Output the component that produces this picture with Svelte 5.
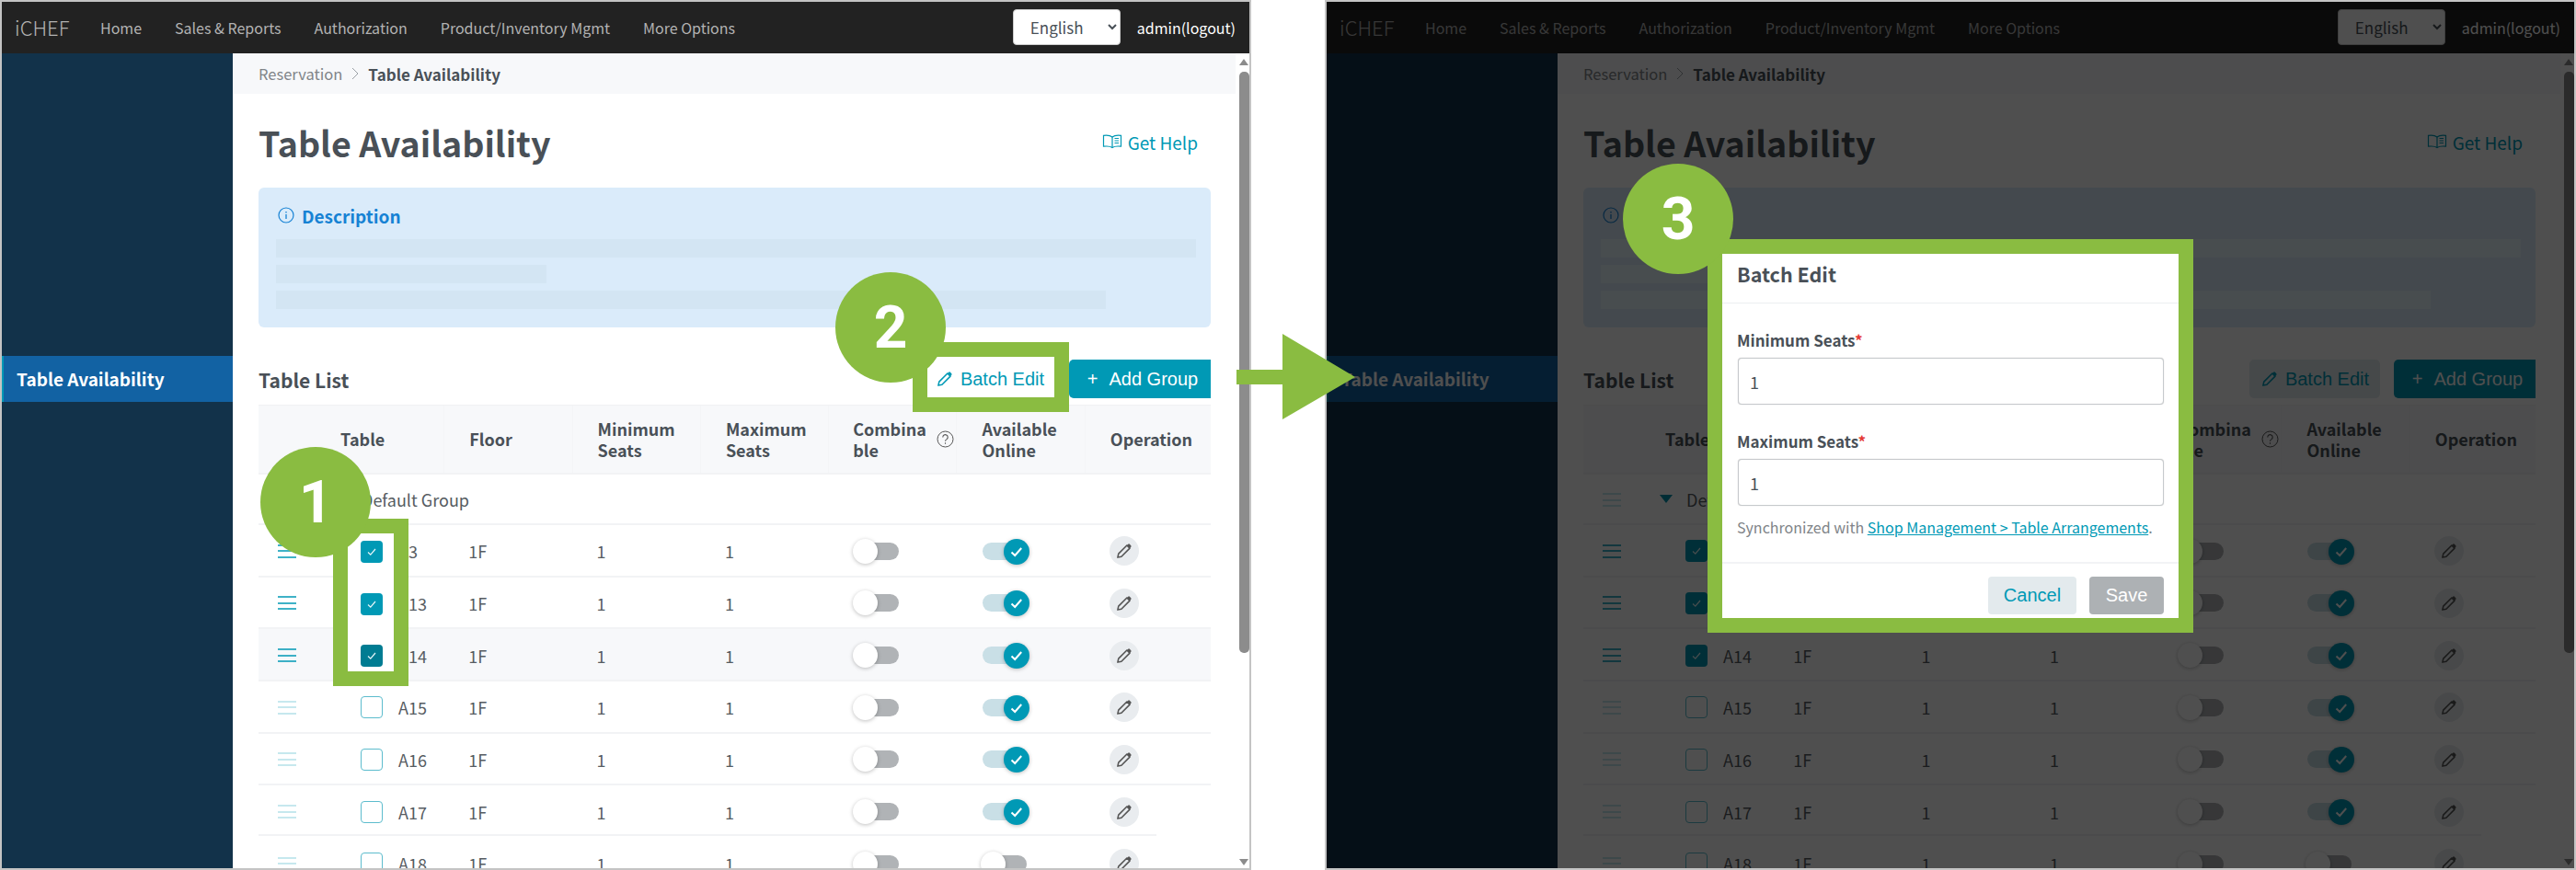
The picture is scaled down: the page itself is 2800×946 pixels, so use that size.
<script lang="ts">
  const nav = ['Home', 'Sales & Reports', 'Authorization', 'Product/Inventory Mgmt', 'More Options'];

  const rows = [
    { name: 'A3', checked: true, online: true },
    { name: 'A13', checked: true, online: true },
    { name: 'A14', checked: true, online: true, hover: true },
    { name: 'A15', checked: false, online: true },
    { name: 'A16', checked: false, online: true },
    { name: 'A17', checked: false, online: true, short: true },
    { name: 'A18', checked: false, online: false, short: true },
  ];
</script>

{#snippet pencil(size)}
  <svg class="pencil" width={size} height={size} viewBox="0 0 18 18">
    <path d="M2.6 15.4l.8-3.6 8.2-8.2 2.8 2.8-8.2 8.2z" fill="none" stroke="currentColor" stroke-width="1.4" stroke-linejoin="round" />
    <path d="M11.6 3.6l1-1a1.3 1.3 0 0 1 1.9 0l.9.9a1.3 1.3 0 0 1 0 1.9l-1 1z" fill="currentColor" />
  </svg>
{/snippet}

{#snippet checkbox(on, hover = false)}
  <span class="checkbox" class:checkbox--on={on} class:checkbox--hover={hover}>
    {#if on}
      <svg width="14" height="14" viewBox="0 0 14 14"><path d="M3 7.5l2.8 2.6L11 4" fill="none" stroke="#e6f6f9" stroke-width="1.2" /></svg>
    {/if}
  </span>
{/snippet}

{#snippet handle(active)}
  <span class="handle" class:handle--active={active}><i></i><i></i><i></i></span>
{/snippet}

{#snippet screen(dimmed)}
  <section class="screen" class:screen--dimmed={dimmed}>
    <header class="topbar">
      <span class="brand">iCHEF</span>
      <nav class="nav">
        {#each nav as item}
          <span>{item}</span>
        {/each}
      </nav>
      <select class="lang"><option>English</option></select>
      <span class="user">admin(logout)</span>
    </header>

    <div class="body">
      <aside class="sidebar">
        <div class="sidebar__item">Table Availability</div>
      </aside>

      <main class="main">
        <div class="crumbs">
          <span>Reservation</span>
          <svg width="10" height="16" viewBox="0 0 10 16"><path d="M2 2l6 6-6 6" fill="none" stroke="#9aa0a6" stroke-width="1" /></svg>
          <b>Table Availability</b>
        </div>

        <div class="content">
          <div class="head">
            <h1>Table Availability</h1>
            <span class="help">
              <svg width="22" height="16" viewBox="0 0 22 16" fill="none" stroke="currentColor" stroke-width="1.2">
                <path d="M11 3C9 1.4 5 1 1.5 1.4v11.8C5 12.8 9 13 11 14.5c2-1.5 6-1.7 9.500-1.300V1.400C17 1 13 1.400 11 3z" />
                <path d="M11 3v11.500M13.500 4.500h4.500M13.500 7h4.500M13.500 9.500h4.500" />
              </svg>
              Get Help
            </span>
          </div>

          <div class="desc">
            <div class="desc__title">
              <svg width="18" height="18" viewBox="0 0 18 18" fill="none" stroke="currentColor">
                <circle cx="9" cy="9" r="8" stroke-width="1.200" />
                <path d="M9 8v5" stroke-width="1.300" />
                <path d="M9 5v1.400" stroke-width="1.300" />
              </svg>
              Description
            </div>
            <div class="bar bar--full"></div>
            <div class="bar bar--short"></div>
            <div class="bar bar--long"></div>
          </div>

          <div class="list-head">
            <h2>Table List</h2>
            <div class="actions">
              <button class="btn btn--light" class:btn--plain={!dimmed}>{@render pencil(20)}Batch Edit</button>
              <button class="btn btn--primary"><span class="plus">+</span>Add Group</button>
            </div>
          </div>

          <div class="table">
            <div class="tr tr--head">
              <div></div>
              <div class="th">Table</div>
              <div class="th">Floor</div>
              <div class="th">Minimum<br />Seats</div>
              <div class="th">Maximum<br />Seats</div>
              <div class="th th--help">
                <span>Combina<br />ble</span>
                <svg width="19" height="19" viewBox="0 0 19 19" fill="none" stroke="#555">
                  <circle cx="9.500" cy="9.500" r="8.500" stroke-width="1" />
                  <path d="M6.800 7.400a2.700 2.700 0 1 1 4.200 2.200c-1 .6-1.500 1.100-1.500 2.200M9.500 13.200v1.500" stroke-width="1.100" />
                </svg>
              </div>
              <div class="th">Available<br />Online</div>
              <div class="th">Operation</div>
            </div>

            <div class="tr tr--group">
              <div class="td td--handle">{@render handle(false)}</div>
              <div class="group-name">
                <svg width="14" height="9" viewBox="0 0 14 9"><path d="M0 0h14L7 9z" fill="#0090aa" /></svg>
                Default Group
              </div>
            </div>

            {#each rows as row}
              <div class="tr" class:tr--hover={row.hover && !dimmed} class:tr--short={row.short}>
                <div class="td td--handle">{@render handle(row.checked)}</div>
                <div class="td td--table">
                  {@render checkbox(row.checked)}
                  <span>{row.name}</span>
                </div>
                <div class="td">1F</div>
                <div class="td">1</div>
                <div class="td">1</div>
                <div class="td"><span class="toggle"><i></i></span></div>
                <div class="td">
                  <span class="toggle" class:toggle--on={row.online}>
                    <i>
                      {#if row.online}
                        <svg width="18" height="18" viewBox="0 0 18 18"><path d="M3.500 9.500l3.700 3.500 7-8" fill="none" stroke="#fff" stroke-width="2" /></svg>
                      {/if}
                    </i>
                  </span>
                </div>
                <div class="td"><span class="edit">{@render pencil(20)}</span></div>
              </div>
            {/each}
          </div>
        </div>
      </main>

      <div class="scrollbar">
        <i class="scrollbar__up"></i>
        <i class="scrollbar__thumb"></i>
        <i class="scrollbar__down"></i>
      </div>
    </div>

    {#if dimmed}
      <div class="backdrop"></div>
    {/if}
  </section>
{/snippet}

<div class="page">
  {@render screen(false)}
  {@render screen(true)}

  <!-- annotations drawn over the two screenshots -->
  <div class="step step--1">1</div>
  <div class="step step--2">2</div>
  <div class="step step--3">3</div>

  <div class="mark mark--checks">
    {@render checkbox(true)}
    {@render checkbox(true)}
    {@render checkbox(true, true)}
  </div>
  <div class="mark mark--batch"></div>

  <svg class="arrow" width="130" height="94" viewBox="0 0 130 94">
    <path d="M0 39h50V0l79 47-79 46V55H0z" fill="#8abc41" />
  </svg>

  <div class="modal">
    <div class="modal__title">Batch Edit</div>
    <div class="modal__body">
      <label class="field">
        <span>Minimum Seats<em>*</em></span>
        <input value="1" />
      </label>
      <label class="field">
        <span>Maximum Seats<em>*</em></span>
        <input value="1" />
      </label>
      <p class="note">Synchronized with <a href="#top">Shop Management &gt; Table Arrangements</a>.</p>
    </div>
    <div class="modal__foot">
      <button class="btn btn--cancel">Cancel</button>
      <button class="btn btn--save">Save</button>
    </div>
  </div>
</div>

<style>
  :global(body) {
    margin: 0;
    background: #fff;
  }

  .page {
    position: relative;
    display: flex;
    gap: 80px;
    width: 2800px;
    height: 946px;
    overflow: hidden;
    font-family: 'Noto Sans CJK TC', 'Noto Sans', sans-serif;
    color: #495057;
  }

  .screen {
    position: relative;
    display: flex;
    flex-direction: column;
    width: 1360px;
    height: 946px;
    box-sizing: border-box;
    border: 2px solid #c4c4c4;
    overflow: hidden;
    background: #fff;
  }

  .backdrop {
    position: absolute;
    inset: 0;
    background: rgba(0, 0, 0, 0.69);
  }

  .topbar {
    display: flex;
    align-items: center;
    flex: none;
    height: 56px;
    padding: 0 15px 0 14px;
    background: #222;
    color: #b3b3b3;
  }

  .brand {
    width: 93px;
    font-size: 22px;
    font-weight: 300;
    margin-bottom: 2px;
  }

  .nav {
    display: flex;
    flex: 1;
    gap: 36px;
    font-size: 16px;
  }

  .lang {
    width: 117px;
    height: 39px;
    margin: -2px 18px 0 0;
    padding-left: 14px;
    border: 1px solid #ccc;
    border-radius: 4px;
    background: #fff;
    color: #495057;
    font: 17px 'Noto Sans CJK TC', sans-serif;
  }

  .user {
    color: #fff;
    font-size: 16px;
  }

  .body {
    display: flex;
    flex: 1;
    min-height: 0;
  }

  .sidebar {
    flex: none;
    width: 251px;
    padding-top: 329px;
    box-sizing: border-box;
    background: #12324a;
  }

  .sidebar__item {
    height: 50px;
    padding-left: 14px;
    border-left: 2px solid #0099b5;
    background: #1262a3;
    color: #fff;
    font-size: 19px;
    font-weight: 700;
    line-height: 50px;
  }

  .main {
    flex: 1;
    min-width: 0;
  }

  .crumbs {
    display: flex;
    align-items: center;
    gap: 9px;
    height: 44px;
    padding-left: 28px;
    background: #f7f8fa;
    color: #808488;
    font-size: 16.500px;
  }

  .crumbs b {
    color: #495057;
    font-size: 17px;
  }

  .content {
    padding: 0 27px 0 28px;
  }

  .head {
    display: flex;
    align-items: center;
    justify-content: space-between;
    height: 102px;
    padding: 2px 14px 0 0;
    box-sizing: border-box;
  }

  h1 {
    margin: 0;
    font-size: 37.600px;
    font-weight: 700;
  }

  .help {
    display: flex;
    align-items: center;
    gap: 6px;
    color: #0099b5;
    font-size: 19px;
  }

  .desc {
    height: 152px;
    padding: 16px 16px 0 19px;
    box-sizing: border-box;
    border-radius: 6px;
    background: #daebfa;
  }

  .desc__title {
    display: flex;
    align-items: center;
    gap: 8px;
    height: 28px;
    margin-bottom: 12px;
    margin-left: 2px;
    color: #1682d4;
    font-size: 19px;
    font-weight: 700;
  }

  .bar {
    height: 20px;
    margin-bottom: 8px;
    background: #d3e5f3;
  }

  .screen--dimmed .bar {
    background: #e8f8ff;
  }

  .bar--short {
    width: 294px;
  }

  .bar--long {
    width: 902px;
  }

  .bar--full {
    width: 1000px;
  }

  .list-head {
    display: flex;
    align-items: flex-end;
    justify-content: space-between;
    height: 84px;
    padding-bottom: 7px;
    box-sizing: border-box;
  }

  h2 {
    margin: 0 0 5px;
    font-size: 21px;
    font-weight: 700;
  }

  .actions {
    display: flex;
    gap: 15px;
  }

  .btn {
    display: flex;
    align-items: center;
    justify-content: center;
    height: 42px;
    padding: 0;
    border: 0;
    border-radius: 5px;
    font-family: 'Liberation Sans', Arial, sans-serif;
    font-size: 20px;
  }

  .btn--light {
    gap: 7px;
    width: 142px;
    background: #e3ebee;
    color: #0099b5;
  }

  .btn--plain {
    background: #fff;
  }

  .btn--primary {
    width: 154px;
    padding-left: 6px;
    box-sizing: border-box;
    border-radius: 5px 0 0 5px;
    background: #0099b5;
    color: #fff;
  }

  .plus {
    margin-right: 12px;
    font-weight: 400;
  }

  .table {
    border-top: 1px solid #f0f1f3;
  }

  .tr {
    display: grid;
    grid-template-columns: 62px repeat(6, 139.3px) 1fr;
    align-items: center;
    height: 56.67px;
    box-sizing: border-box;
    border-bottom: 2px solid #f2f3f5;
    color: #565c62;
    font-size: 18px;
  }

  .tr--head {
    align-items: stretch;
    height: 75px;
    background: #f7f8fa;
    color: #495057;
  }

  .tr--group {
    height: 55px;
  }

  .tr--hover {
    background: #f7f8fa;
  }

  .tr--short {
    border-bottom-color: transparent;
    background: linear-gradient(#f2f3f5, #f2f3f5) no-repeat 0 100% / 976px 2px;
  }

  .th {
    display: flex;
    align-items: center;
    padding-left: 27px;
    border-left: 1px solid #f4f5f7;
    font-size: 18px;
    font-weight: 700;
    line-height: 23px;
  }

  .th:nth-child(2) {
    border-left: 0;
  }

  .th--help {
    gap: 11px;
    padding-left: 26px;
  }

  .td {
    padding-top: 2px;
    padding-left: 27px;
    display: flex;
    align-items: center;
  }

  .td--handle {
    padding-left: 21px;
  }

  .td--table {
    gap: 17px;
    padding-left: 49px;
  }

  .group-name {
    grid-column: 2 / -1;
    display: flex;
    align-items: center;
    gap: 15px;
    padding-left: 21px;
  }

  .handle {
    display: flex;
    flex-direction: column;
    gap: 4.500px;
    width: 20px;
    opacity: 0.22;
  }

  .handle--active {
    opacity: 0.75;
  }

  .handle i {
    height: 2px;
    background: #0099b5;
  }

  .checkbox {
    display: flex;
    align-items: center;
    justify-content: center;
    flex: none;
    width: 24px;
    height: 24px;
    box-sizing: border-box;
    border: 1.500px solid #5cbccd;
    border-radius: 4px;
  }

  .checkbox--on {
    border: 0;
    background: #0099b5;
  }

  .checkbox--hover {
    background: #007c92;
  }

  .toggle {
    position: relative;
    display: block;
    width: 50px;
    height: 19px;
  }

  .toggle::before {
    content: '';
    position: absolute;
    left: 12px;
    right: 0;
    top: 0;
    bottom: 0;
    border-radius: 10px;
    background: #b0b3b6;
  }

  .toggle i {
    position: absolute;
    left: 0;
    top: -4px;
    display: flex;
    align-items: center;
    justify-content: center;
    width: 27px;
    height: 27px;
    border-radius: 50%;
    background: #fff;
    box-shadow: 0 1px 4px rgba(0, 0, 0, 0.25);
  }

  .toggle--on::before {
    left: 2px;
    right: 10px;
    background: #c9dfe6;
  }

  .toggle--on i {
    left: 25px;
    width: 28px;
    height: 28px;
    background: #0099b5;
  }

  .edit {
    display: flex;
    align-items: center;
    justify-content: center;
    width: 32px;
    height: 32px;
    border-radius: 50%;
    background: #e9ecef;
    color: #555;
  }

  .pencil {
    flex: none;
  }

  .scrollbar {
    position: relative;
    flex: none;
    width: 15px;
    background: #fff;
  }

  .scrollbar i {
    position: absolute;
  }

  .scrollbar__thumb {
    left: 4px;
    right: 0;
    top: 20px;
    height: 632px;
    border-radius: 5px;
    background: #8c8c8c;
  }

  .scrollbar__up {
    left: 4px;
    top: 6px;
    border: 5px solid transparent;
    border-top: 0;
    border-bottom: 7px solid #8c8c8c;
  }

  .scrollbar__down {
    left: 4px;
    bottom: 3px;
    border: 5px solid transparent;
    border-bottom: 0;
    border-top: 7px solid #8c8c8c;
  }

  .step {
    position: absolute;
    z-index: 2;
    display: flex;
    align-items: center;
    justify-content: center;
    width: 120px;
    height: 120px;
    border-radius: 50%;
    background: #8abc41;
    color: #fff;
    font-family: Roboto, sans-serif;
    font-size: 64px;
    font-weight: 700;
  }

  .step--1 {
    left: 283px;
    top: 486px;
  }

  .step--2 {
    left: 908px;
    top: 296px;
  }

  .step--3 {
    left: 1764px;
    top: 178px;
  }

  .mark {
    position: absolute;
    z-index: 1;
    box-sizing: border-box;
    border: 16px solid #8abc41;
  }

  .mark--checks {
    left: 362px;
    top: 564px;
    width: 82px;
    height: 182px;
    display: flex;
    flex-direction: column;
    gap: 32.500px;
    padding: 8px 0 0 14px;
    background: #fff;
  }

  .mark--batch {
    left: 992px;
    top: 372px;
    width: 170px;
    height: 76px;
  }

  .arrow {
    position: absolute;
    z-index: 1;
    left: 1344px;
    top: 363px;
  }

  .modal {
    position: absolute;
    z-index: 1;
    left: 1856px;
    top: 260px;
    width: 528px;
    height: 428px;
    box-sizing: border-box;
    border: 16px solid #8abc41;
    overflow: hidden;
    background: #fff;
  }

  .modal__title {
    height: 54px;
    padding-left: 16px;
    box-sizing: border-box;
    border-bottom: 1px solid #eceef0;
    font-size: 21.500px;
    font-weight: 700;
    line-height: 44px;
  }

  .modal__body {
    padding: 28px 16px 26px 17px;
    border-bottom: 2px solid #f2f3f5;
  }

  .field {
    display: block;
    margin-bottom: 28px;
    font-size: 17px;
    font-weight: 700;
  }

  .field span {
    display: block;
    height: 24px;
    margin-bottom: 7px;
    margin-left: -1px;
    line-height: 24px;
  }

  .field em {
    color: #e53935;
    font-style: normal;
  }

  .field input {
    display: block;
    width: 100%;
    height: 51px;
    padding: 0 12px;
    box-sizing: border-box;
    border: 1px solid #c6c9cc;
    border-radius: 4px;
    color: #495057;
    font: 18px 'Noto Sans CJK TC', sans-serif;
    box-shadow: 0 0 1px #bbb;
  }

  .note {
    height: 24px;
    margin: -17px 0 0 -1px;
    color: #808488;
    font-size: 16px;
    line-height: 24px;
  }

  .note a {
    color: #0099b5;
  }

  .modal__foot {
    display: flex;
    justify-content: flex-end;
    gap: 14px;
    padding: 14px 16px 0;
  }

  .btn--cancel,
  .btn--save {
    height: 41px;
    border-radius: 4px;
  }

  .btn--cancel {
    width: 96px;
    background: #e3eaed;
    color: #0099b5;
  }

  .btn--save {
    width: 81px;
    background: #adb1b4;
    color: #fff;
  }
</style>
